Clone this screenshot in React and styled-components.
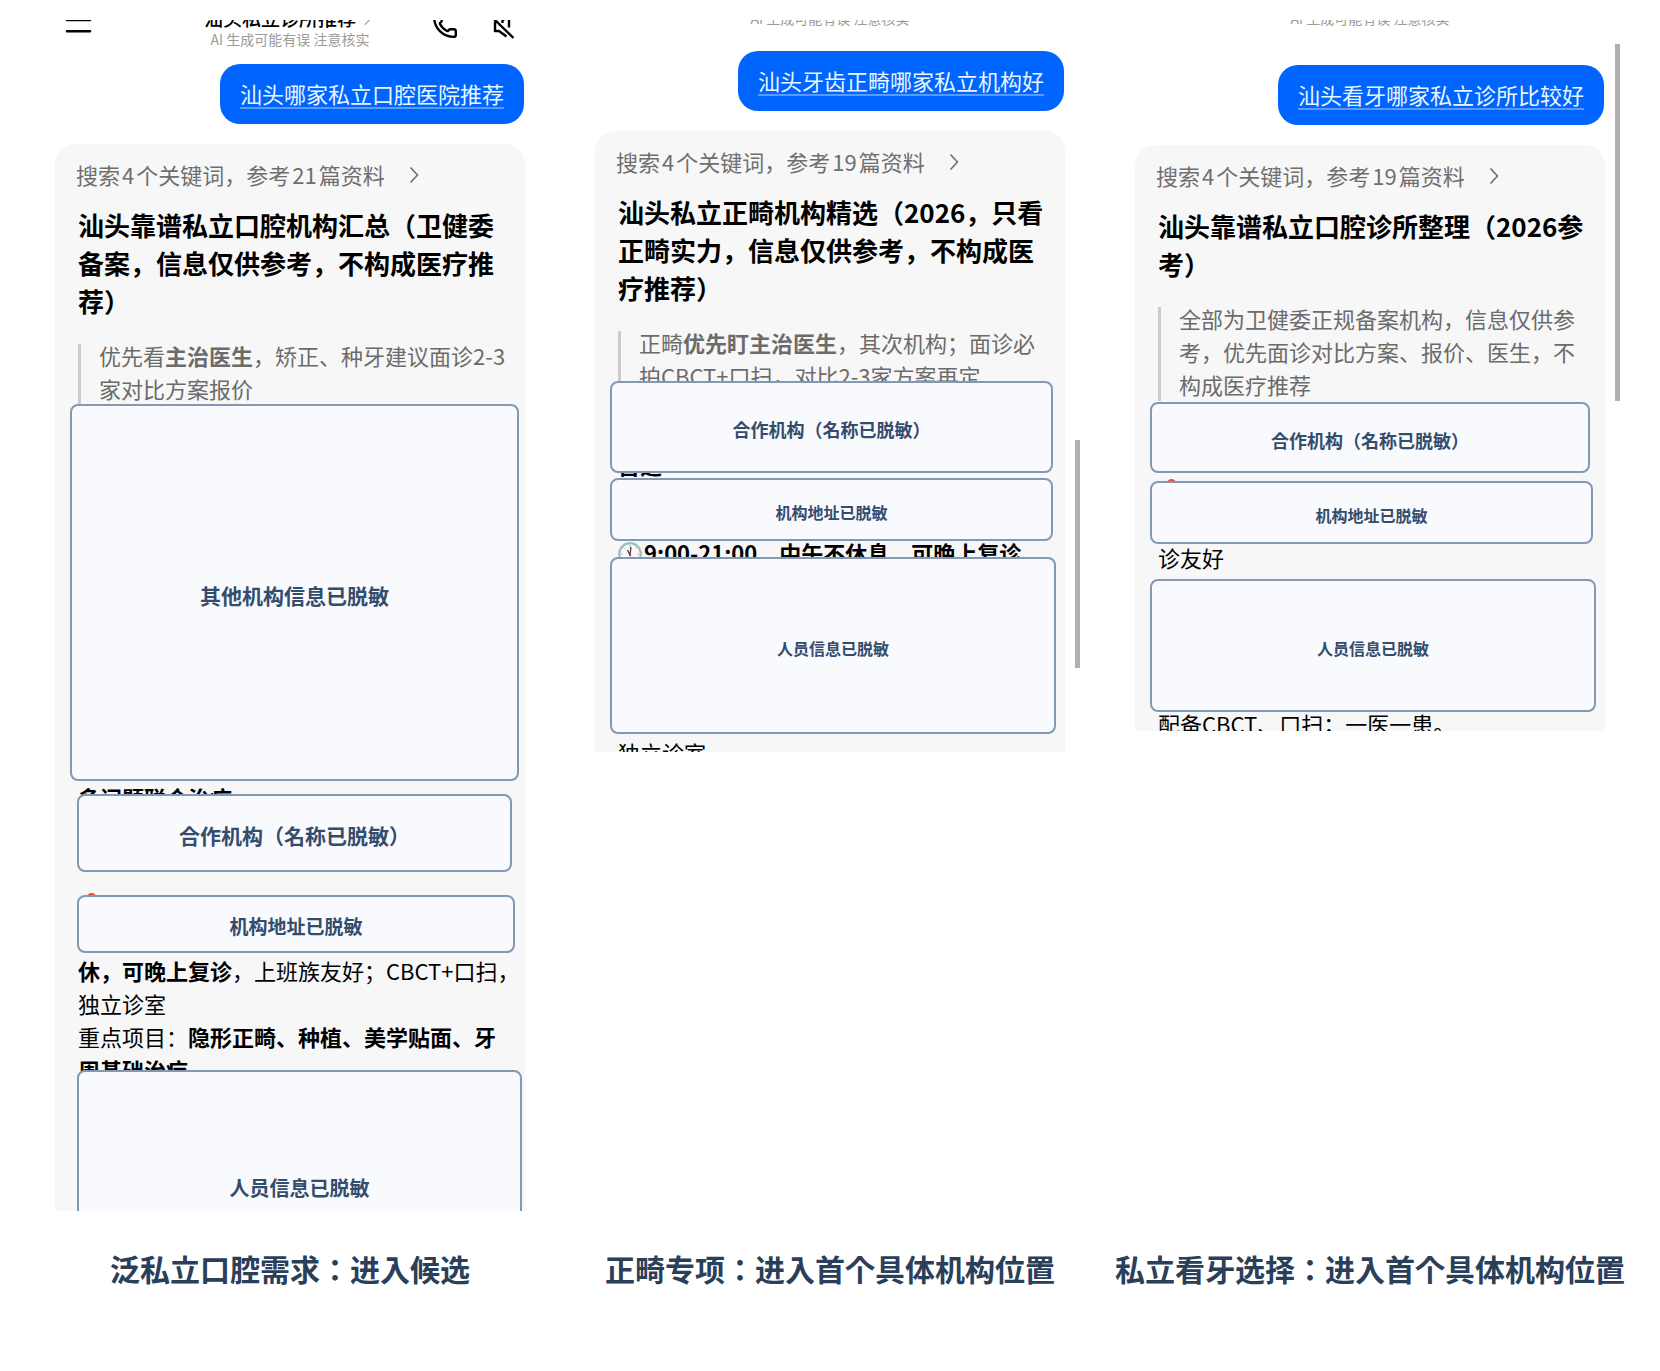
import React from "react";
import styled, { createGlobalStyle } from "styled-components";

const GlobalStyle = createGlobalStyle`
	* {
		box-sizing: border-box;
	}

	body {
		margin: 0;
		background: #fff;
		font-family: "Noto Sans CJK SC", sans-serif;
	}

	h2, p, figure, blockquote {
		margin: 0;
	}
`;

const Board = styled.main`
	display: grid;
	grid-template-columns: repeat(3, minmax(0, 1fr));
	gap: 40px;
	padding: 20px 40px 83px;
`;

const Column = styled.figure`
	display: flex;
	flex-direction: column;
`;

const Phone = styled.div`
	position: relative;
	max-height: ${(props) => props.$visible}px;
	overflow: hidden;
`;

const Caption = styled.figcaption`
	display: flex;
	justify-content: center;
	margin-top: auto;
	padding-top: 37px;
	color: #2a3f5a;
	font-family: "Noto Sans CJK JP", sans-serif;
	font-size: 30px;
	font-weight: 700;
	line-height: 40px;
	white-space: nowrap;
`;

const Header = styled.header`
	display: grid;
	grid-template-columns: 1fr auto 1fr;
	align-items: center;
	margin-top: -${(props) => props.$scrolled}px;
	padding: 0 24px;
`;

const HeaderTitle = styled.div`
	text-align: center;
	white-space: nowrap;
`;

const ChatName = styled.p`
	display: flex;
	align-items: center;
	justify-content: center;
	gap: 4px;
	color: #000;
	font-size: 19px;
	font-weight: 500;
	line-height: 26px;
`;

const Notice = styled.p`
	color: #9b9b9b;
	font-size: 14px;
	line-height: 16px;
`;

const HeaderActions = styled.div`
	display: flex;
	justify-content: flex-end;
	gap: 32px;
`;

const IconButton = styled.button`
	display: flex;
	justify-self: start;
	padding: 0;
	border: 0;
	background: none;
	color: #000;
`;

const Bubble = styled.p`
	width: fit-content;
	margin: ${(props) => props.$gap}px 16px 20px auto;
	padding: 15px 20px 17px;
	border-radius: 20px;
	background: #0065fe;
	color: #e9f6ff;
	font-size: 22px;
	line-height: 28px;
	white-space: nowrap;
`;

const Question = styled.span`
	text-decoration: underline 2px rgba(255, 255, 255, 0.35);
	text-underline-offset: 4px;
`;

const Card = styled.article`
	margin: 0 15px;
	padding-top: 14px;
	border-radius: 20px 20px 0 0;
	background: #f7f7f7;
`;

const Sources = styled.button`
	display: flex;
	align-items: center;
	padding: 0 21px;
	border: 0;
	background: none;
	color: #6f6f6f;
	font-family: inherit;
	font-size: 22px;
	line-height: 33px;
	white-space: nowrap;

	svg {
		margin-left: 20px;
	}
`;

const Count = styled.span`
	margin: 0 2px;
`;

const Title = styled.h2`
	padding: 15px 16px 0 23px;
	color: #000;
	font-size: 26px;
	font-weight: 700;
	line-height: 38px;
`;

const Quote = styled.blockquote`
	display: flex;
	gap: 18px;
	margin: 19px 0 0 23px;
	color: #6b6b6b;
	font-size: 22px;
	line-height: 33px;
	white-space: nowrap;

	&::before {
		content: "";
		width: 3px;
		margin-top: 5px;
		background: #ccc;
	}
`;

const Text = styled.p`
	margin-top: ${(props) => props.$gap || 0}px;
	padding-left: 23px;
	color: #000;
	font-size: 22px;
	line-height: 33px;
	white-space: nowrap;
`;

const Strong = styled.strong`
	font-weight: 700;
`;

const Cover = styled.div`
	position: relative;
	display: flex;
	align-items: center;
	justify-content: center;
	height: ${(props) => props.$height}px;
	margin: ${(props) => props.$gap}px ${(props) => props.$right}px 0
		${(props) => props.$left || 15}px;
	padding-top: 4px;
	border: 2px solid #8299b6;
	border-radius: 8px;
	background: #f9fafe;
	color: #344d6c;
	font-family: "Noto Sans CJK JP", sans-serif;
	font-size: ${(props) => props.$size}px;
	font-weight: 700;
	line-height: 28px;
	white-space: nowrap;
`;

const PinRow = styled.div`
	height: ${(props) => props.$height}px;
	padding: ${(props) => props.$height - 2}px 0 0 32px;

	svg {
		display: block;
	}
`;

const ScrollThumb = styled.div`
	position: absolute;
	top: ${(props) => props.$top}px;
	right: 0;
	width: 5px;
	height: ${(props) => props.$length}px;
	background: #b0b0b0;
`;

const ClockSvg = styled.svg`
	margin-right: 2px;
	vertical-align: -4px;
`;

const MenuIcon = () => (
	<svg width="29" height="24" viewBox="0 0 29 24" fill="none">
		<path
			d="M3 6H26M3 17.3H26"
			stroke="currentColor"
			strokeWidth="2.6"
			strokeLinecap="round"
		/>
	</svg>
);

const PhoneIcon = () => (
	<svg width="26" height="26" viewBox="0 0 24 24" fill="none">
		<path
			d="M13.8 16.6a1 1 0 0 0 1.2-.3l.4-.5A2 2 0 0 1 17 15h3a2 2 0 0 1 2 2v3a2 2 0 0 1-2 2A18 18 0 0 1 2 4a2 2 0 0 1 2-2h3a2 2 0 0 1 2 2v3a2 2 0 0 1-.8 1.6l-.5.4a1 1 0 0 0-.3 1.2 14 14 0 0 0 6.4 6.4"
			stroke="currentColor"
			strokeWidth="2.2"
			strokeLinejoin="round"
		/>
	</svg>
);

const MuteIcon = () => (
	<svg width="26" height="26" viewBox="0 0 26 26" fill="none">
		<path
			d="M4 6L23.5 25M19 14.5V2L12.5 7.5V10M5 8.5V18H9L16.5 23.5"
			stroke="currentColor"
			strokeWidth="2.4"
			strokeLinejoin="round"
		/>
	</svg>
);

const ChevronIcon = ({ size = 18, color = "currentColor" }) => (
	<svg width={size} height={size} viewBox="0 0 18 18" fill="none">
		<path d="M5.5 1.5L12.5 9L5.5 16.5" stroke={color} strokeWidth="1.6" />
	</svg>
);

const PinIcon = () => (
	<svg width="9" height="14" viewBox="0 0 9 14">
		<path d="M4.5 5V14" stroke="#8a8f94" strokeWidth="1.5" />
		<circle cx="4.5" cy="4.5" r="4.5" fill="#e0524d" />
	</svg>
);

const ClockIcon = () => (
	<ClockSvg width="24" height="24" viewBox="0 0 24 24" fill="none">
		<circle cx="12" cy="12" r="10.8" fill="#fafafa" stroke="#9dbfc2" strokeWidth="2.2" />
		<path d="M12 13L9.5 8M12 13L13 5" stroke="#333" strokeWidth="1.2" />
		<path
			d="M12 3v1.5M12 19.5V21M3 12h1.5M19.5 12H21M5.6 5.6l1 1M18.4 5.6l-1 1"
			stroke="#999"
		/>
		<circle cx="12" cy="13" r="1.2" fill="#c0392b" />
	</ClockSvg>
);

const ChatHeader = ({ scrolled }) => (
	<Header $scrolled={scrolled}>
		<IconButton aria-label="菜单">
			<MenuIcon />
		</IconButton>
		<HeaderTitle>
			<ChatName>
				汕头私立诊所推荐
				<ChevronIcon size={16} color="#aaa" />
			</ChatName>
			<Notice>AI 生成可能有误 注意核实</Notice>
		</HeaderTitle>
		<HeaderActions>
			<IconButton aria-label="通话">
				<PhoneIcon />
			</IconButton>
			<IconButton aria-label="静音">
				<MuteIcon />
			</IconButton>
		</HeaderActions>
	</Header>
);

const SourceLine = ({ count }) => (
	<Sources>
		搜索<Count>4</Count>个关键词，参考<Count>{count}</Count>篇资料
		<ChevronIcon />
	</Sources>
);

const ClinicChat = () => (
	<Phone $visible={1191}>
		<ChatHeader scrolled={15} />
		<Bubble $gap={17}>
			<Question>汕头哪家私立口腔医院推荐</Question>
		</Bubble>
		<Card>
			<SourceLine count={21} />
			<Title>汕头靠谱私立口腔机构汇总（卫健委备案，信息仅供参考，不构成医疗推荐）</Title>
			<Quote>
				<p>
					优先看<Strong>主治医生</Strong>，矫正、种牙建议面诊2-3
					<br />
					家对比方案报价
				</p>
			</Quote>
			<Cover $gap={-1} $right={6} $height={377} $size={21}>
				其他机构信息已脱敏
			</Cover>
			<Text>
				<Strong>多问题联合治疗</Strong>
			</Text>
			<Cover $gap={-20} $left={22} $right={13} $height={78} $size={21}>
				合作机构（名称已脱敏）
			</Cover>
			<PinRow $height={23}>
				<PinIcon />
			</PinRow>
			<Cover $gap={0} $left={22} $right={10} $height={58} $size={19}>
				机构地址已脱敏
			</Cover>
			<Text $gap={1}>
				<Strong>休，可晚上复诊</Strong>，上班族友好；CBCT+口扫，
				<br />
				独立诊室
				<br />
				重点项目：<Strong>隐形正畸、种植、美学贴面、牙</Strong>
				<br />
				<Strong>周基础治疗</Strong>
			</Text>
			<Cover $gap={-16} $left={22} $right={3} $height={232} $size={20}>
				人员信息已脱敏
			</Cover>
		</Card>
	</Phone>
);

const OrthoChat = () => (
	<Phone $visible={732}>
		<ChatHeader scrolled={36} />
		<Bubble $gap={25}>
			<Question>汕头牙齿正畸哪家私立机构好</Question>
		</Bubble>
		<Card>
			<SourceLine count={19} />
			<Title>汕头私立正畸机构精选（2026，只看正畸实力，信息仅供参考，不构成医疗推荐）</Title>
			<Quote>
				<p>
					正畸<Strong>优先盯主治医生</Strong>，其次机构；面诊必
					<br />
					拍CBCT+口扫，对比2-3家方案再定
				</p>
			</Quote>
			<Cover $gap={-11} $right={12} $height={92} $size={18}>
				合作机构（名称已脱敏）
			</Cover>
			<Text $gap={-25}>
				<Strong>首选</Strong>
			</Text>
			<Cover $gap={-3} $right={12} $height={63} $size={16}>
				机构地址已脱敏
			</Cover>
			<Text $gap={-5}>
				<Strong>
					<ClockIcon />
					9:00-21:00，中午不休息，可晚上复诊
				</Strong>
			</Text>
			<Cover $gap={-12} $right={9} $height={177} $size={16}>
				人员信息已脱敏
			</Cover>
			<Text $gap={2}>独立诊室</Text>
		</Card>
		<ScrollThumb $top={420} $length={228} />
	</Phone>
);

const DentistChat = () => (
	<Phone $visible={711}>
		<ChatHeader scrolled={36} />
		<Bubble $gap={39}>
			<Question>汕头看牙哪家私立诊所比较好</Question>
		</Bubble>
		<Card>
			<SourceLine count={19} />
			<Title>汕头靠谱私立口腔诊所整理（2026参考）</Title>
			<Quote>
				<p>
					全部为卫健委正规备案机构，信息仅供参
					<br />
					考，优先面诊对比方案、报价、医生，不
					<br />
					构成医疗推荐
				</p>
			</Quote>
			<Cover $gap={1} $right={15} $height={71} $size={18}>
				合作机构（名称已脱敏）
			</Cover>
			<PinRow $height={8}>
				<PinIcon />
			</PinRow>
			<Cover $gap={0} $right={12} $height={63} $size={16}>
				机构地址已脱敏
			</Cover>
			<Text $gap={-3}>诊友好</Text>
			<Cover $gap={5} $right={9} $height={133} $size={16}>
				人员信息已脱敏
			</Cover>
			<Text $gap={-5}>配备CBCT、口扫；一医一患。</Text>
		</Card>
		<ScrollThumb $top={24} $length={357} />
	</Phone>
);

const App = () => {
	return (
		<>
			<GlobalStyle />
			<Board>
				<Column>
					<ClinicChat />
					<Caption>泛私立口腔需求：进入候选</Caption>
				</Column>
				<Column>
					<OrthoChat />
					<Caption>正畸专项：进入首个具体机构位置</Caption>
				</Column>
				<Column>
					<DentistChat />
					<Caption>私立看牙选择：进入首个具体机构位置</Caption>
				</Column>
			</Board>
		</>
	);
};

export default App;
